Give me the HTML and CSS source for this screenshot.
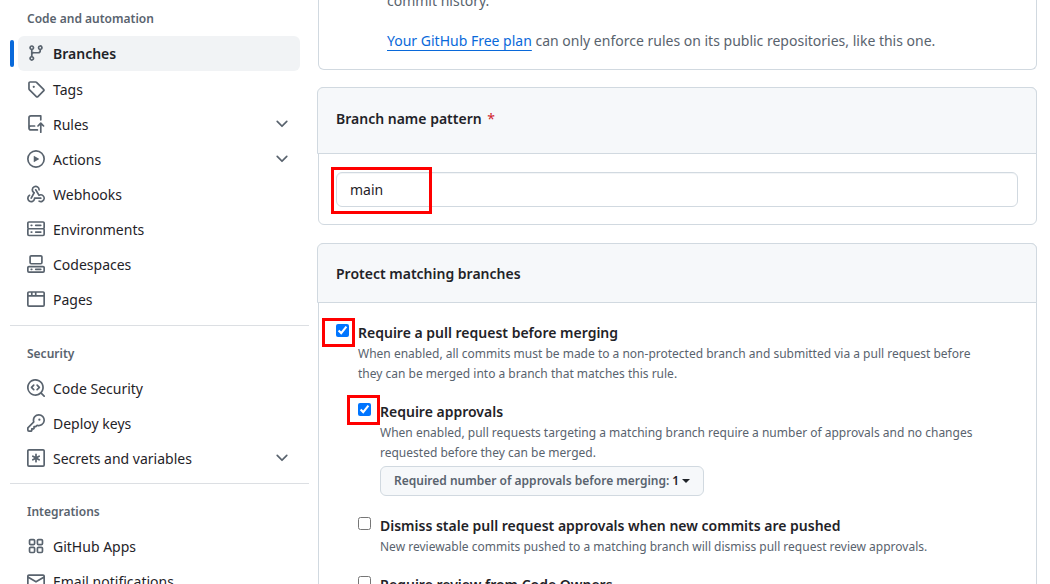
FILE: index.html
```html
<!DOCTYPE html>
<html lang="en">
<head>
<meta charset="utf-8">
<meta name="viewport" content="width=device-width, initial-scale=1">
<title>Branch protection rule</title>
<link rel="stylesheet" href="styles.css">
</head>
<body>
<div class="page">
  <nav class="sidebar" aria-label="Repository settings">
    <section class="group">
      <h2 class="group-title">Code and automation</h2>
      <ul class="nav-list">
        <li><a class="nav-item selected" href="#" aria-current="page">
          <svg class="icon" viewBox="0 0 16 16"><path d="M9.5 3.25a2.25 2.25 0 1 1 3 2.122V6A2.5 2.5 0 0 1 10 8.5H6a1 1 0 0 0-1 1v1.128a2.251 2.251 0 1 1-1.5 0V5.372a2.25 2.25 0 1 1 1.5 0v1.836A2.493 2.493 0 0 1 6 7h4a1 1 0 0 0 1-1v-.628A2.25 2.25 0 0 1 9.5 3.25Zm-6 0a.75.75 0 1 0 1.5 0 .75.75 0 0 0-1.5 0Zm8.25-.75a.75.75 0 1 0 0 1.5.75.75 0 0 0 0-1.5ZM4.25 12a.75.75 0 1 0 0 1.5.75.75 0 0 0 0-1.5Z"/></svg>
          <span class="nav-label">Branches</span></a></li>
        <li><a class="nav-item" href="#">
          <svg class="icon" viewBox="0 0 16 16"><path d="M1 7.775V2.75C1 1.784 1.784 1 2.75 1h5.025c.464 0 .91.184 1.238.513l6.25 6.25a1.75 1.75 0 0 1 0 2.474l-5.026 5.026a1.75 1.75 0 0 1-2.474 0l-6.25-6.25A1.752 1.752 0 0 1 1 7.775Zm1.5 0c0 .066.026.13.073.177l6.25 6.25a.25.25 0 0 0 .354 0l5.025-5.025a.25.25 0 0 0 0-.354l-6.25-6.25a.25.25 0 0 0-.177-.073H2.75a.25.25 0 0 0-.25.25ZM6 5a1 1 0 1 1 0 2 1 1 0 0 1 0-2Z"/></svg>
          <span class="nav-label">Tags</span></a></li>
        <li><button class="nav-item" type="button" aria-expanded="false">
          <svg class="icon" viewBox="0 0 16 16"><path d="M1 2.5A2.5 2.5 0 0 1 3.5 0h8.75a.75.75 0 0 1 .75.75v3.5a.75.75 0 0 1-1.5 0V1.5h-8a1 1 0 0 0-1 1v6.708A2.493 2.493 0 0 1 3.5 9h3.25a.75.75 0 0 1 0 1.5H3.5a1 1 0 0 0 0 2h5.75a.75.75 0 0 1 0 1.5H3.5A2.5 2.5 0 0 1 1 11.5Zm13.23 7.79-1.225-1.224v6.184a.75.75 0 0 1-1.5 0V9.066L10.28 10.29a.75.75 0 0 1-1.06-1.061l2.505-2.504a.75.75 0 0 1 1.06 0L15.29 9.23a.751.751 0 0 1-.018 1.042.751.751 0 0 1-1.042.018Z"/></svg>
          <span class="nav-label">Rules</span>
          <svg class="chevron" viewBox="0 0 16 16"><path d="M12.78 5.22a.749.749 0 0 1 0 1.06l-4.25 4.25a.749.749 0 0 1-1.06 0L3.22 6.28a.749.749 0 1 1 1.06-1.06L8 8.939l3.72-3.719a.749.749 0 0 1 1.06 0Z"/></svg></button></li>
        <li><button class="nav-item" type="button" aria-expanded="false">
          <svg class="icon" viewBox="0 0 16 16"><path d="M8 0a8 8 0 1 1 0 16A8 8 0 0 1 8 0ZM1.5 8a6.5 6.5 0 1 0 13 0 6.5 6.5 0 0 0-13 0Zm4.879-2.773 4.264 2.559a.25.25 0 0 1 0 .428l-4.264 2.559A.25.25 0 0 1 6 10.559V5.442a.25.25 0 0 1 .379-.215Z"/></svg>
          <span class="nav-label">Actions</span>
          <svg class="chevron" viewBox="0 0 16 16"><path d="M12.78 5.22a.749.749 0 0 1 0 1.06l-4.25 4.25a.749.749 0 0 1-1.06 0L3.22 6.28a.749.749 0 1 1 1.06-1.06L8 8.939l3.72-3.719a.749.749 0 0 1 1.06 0Z"/></svg></button></li>
        <li><a class="nav-item" href="#">
          <svg class="icon" viewBox="0 0 16 16"><path d="M5.5 4.25a2.25 2.25 0 0 1 4.5 0 .75.75 0 0 0 1.5 0 3.75 3.75 0 1 0-6.14 2.889l-2.272 4.258a.75.75 0 0 0 1.324.706L7 7.25a.75.75 0 0 0-.309-1.015A2.25 2.25 0 0 1 5.5 4.25Z"/><path d="M7.364 3.607a.75.75 0 0 1 1.03.257l2.608 4.349a3.75 3.75 0 1 1-.628 6.785.75.75 0 0 1 .752-1.299 2.25 2.25 0 1 0-.033-3.88.75.75 0 0 1-1.03-.256L7.107 4.636a.75.75 0 0 1 .257-1.03Z"/><path d="M2.9 8.776A.75.75 0 0 1 2.625 9.8 2.25 2.25 0 1 0 6 11.75a.75.75 0 0 1 .75-.751h5.5a.75.75 0 0 1 0 1.5H7.425a3.751 3.751 0 1 1-5.55-3.998.75.75 0 0 1 1.024.274Z"/></svg>
          <span class="nav-label">Webhooks</span></a></li>
        <li><a class="nav-item" href="#">
          <svg class="icon" viewBox="0 0 16 16"><path d="M1.75 1h12.5c.966 0 1.75.784 1.75 1.75v4c0 .372-.116.717-.314 1 .198.283.314.628.314 1v4a1.75 1.75 0 0 1-1.75 1.75H1.75A1.75 1.75 0 0 1 0 12.75v-4c0-.358.109-.707.314-1a1.739 1.739 0 0 1-.314-1v-4C0 1.784.784 1 1.75 1ZM1.5 2.75v4c0 .138.112.25.25.25h12.5a.25.25 0 0 0 .25-.25v-4a.25.25 0 0 0-.25-.25H1.75a.25.25 0 0 0-.25.25Zm.25 5.75a.25.25 0 0 0-.25.25v4c0 .138.112.25.25.25h12.5a.25.25 0 0 0 .25-.25v-4a.25.25 0 0 0-.25-.25ZM7 4.75A.75.75 0 0 1 7.75 4h4.5a.75.75 0 0 1 0 1.5h-4.5A.75.75 0 0 1 7 4.75ZM7.75 10h4.5a.75.75 0 0 1 0 1.5h-4.5a.75.75 0 0 1 0-1.5ZM3 4.75A.75.75 0 0 1 3.75 4h.5a.75.75 0 0 1 0 1.5h-.5A.75.75 0 0 1 3 4.75ZM3.75 10h.5a.75.75 0 0 1 0 1.5h-.5a.75.75 0 0 1 0-1.5Z"/></svg>
          <span class="nav-label">Environments</span></a></li>
        <li><a class="nav-item" href="#">
          <svg class="icon" viewBox="0 0 16 16"><path d="M0 11.25c0-.966.784-1.75 1.75-1.75h12.5c.966 0 1.75.784 1.75 1.75v3A1.75 1.75 0 0 1 14.25 16H1.75A1.75 1.75 0 0 1 0 14.25Zm2-9.5C2 .784 2.784 0 3.75 0h8.5C13.216 0 14 .784 14 1.75v5a1.75 1.75 0 0 1-1.75 1.75h-8.5A1.75 1.75 0 0 1 2 6.75Zm1.75-.25a.25.25 0 0 0-.25.25v5c0 .138.112.25.25.25h8.5a.25.25 0 0 0 .25-.25v-5a.25.25 0 0 0-.25-.25Zm-2 9.5a.25.25 0 0 0-.25.25v3c0 .138.112.25.25.25h12.5a.25.25 0 0 0 .25-.25v-3a.25.25 0 0 0-.25-.25Z"/><path d="M7 12.75a.75.75 0 0 1 .75-.75h4.5a.75.75 0 0 1 0 1.5h-4.5a.75.75 0 0 1-.75-.75Zm-4 0a.75.75 0 0 1 .75-.75h.5a.75.75 0 0 1 0 1.5h-.5a.75.75 0 0 1-.75-.75Z"/></svg>
          <span class="nav-label">Codespaces</span></a></li>
        <li><a class="nav-item" href="#">
          <svg class="icon" viewBox="0 0 16 16"><path d="M0 2.75C0 1.784.784 1 1.75 1h12.5c.966 0 1.75.784 1.75 1.75v10.5A1.75 1.75 0 0 1 14.25 15H1.75A1.75 1.75 0 0 1 0 13.25ZM14.5 6h-13v7.25c0 .138.112.25.25.25h12.5a.25.25 0 0 0 .25-.25Zm-6-3.5v2h6V2.75a.25.25 0 0 0-.25-.25ZM5 2.5v2h2v-2Zm-3.25 0a.25.25 0 0 0-.25.25V4.5h2v-2Z"/></svg>
          <span class="nav-label">Pages</span></a></li>
      </ul>
    </section>
    <section class="group">
      <h2 class="group-title">Security</h2>
      <ul class="nav-list">
        <li><a class="nav-item" href="#">
          <svg class="icon" viewBox="0 0 16 16"><path d="M8.47 4.97a.75.75 0 0 0 0 1.06L9.94 7.5 8.47 8.97a.75.75 0 1 0 1.06 1.06l2-2a.75.75 0 0 0 0-1.06l-2-2a.75.75 0 0 0-1.06 0ZM6.53 6.03a.75.75 0 0 0-1.06-1.06l-2 2a.75.75 0 0 0 0 1.06l2 2a.75.75 0 1 0 1.06-1.06L5.06 7.5l1.47-1.47Z"/><path d="M12.246 13.307a7.501 7.501 0 1 1 1.06-1.06l2.474 2.473a.749.749 0 0 1-1.06 1.06ZM1.5 7.5a6.002 6.002 0 0 0 3.608 5.504 6.002 6.002 0 0 0 6.486-1.117.748.748 0 0 1 .292-.293A6 6 0 1 0 1.5 7.5Z"/></svg>
          <span class="nav-label">Code Security</span></a></li>
        <li><a class="nav-item" href="#">
          <svg class="icon" viewBox="0 0 16 16"><path d="M10.5 0a5.499 5.499 0 1 1-1.288 10.848l-.932.932a.749.749 0 0 1-.53.22H7v.75a.749.749 0 0 1-.22.53l-.5.5a.749.749 0 0 1-.53.22H5v.75a.749.749 0 0 1-.22.53l-.5.5a.749.749 0 0 1-.53.22h-2A1.75 1.75 0 0 1 0 14.25v-2c0-.199.079-.389.22-.53l4.932-4.932A5.5 5.5 0 0 1 10.5 0Zm-4 5.5c-.001.431.069.86.205 1.269a.75.75 0 0 1-.181.768L1.5 12.56v1.69c0 .138.112.25.25.25h1.69l.06-.06v-1.19a.75.75 0 0 1 .75-.75h1.19l.06-.06v-1.19a.75.75 0 0 1 .75-.75h1.19l1.023-1.025a.75.75 0 0 1 .768-.18A4 4 0 1 0 6.5 5.5ZM11 6a1 1 0 1 1 0-2 1 1 0 0 1 0 2Z"/></svg>
          <span class="nav-label">Deploy keys</span></a></li>
        <li><button class="nav-item" type="button" aria-expanded="false">
          <svg class="icon" viewBox="0 0 16 16"><path d="M0 1.75C0 .784.784 0 1.75 0h12.5C15.216 0 16 .784 16 1.75v12.5A1.75 1.75 0 0 1 14.25 16H1.75A1.75 1.75 0 0 1 0 14.25Zm1.75-.25a.25.25 0 0 0-.25.25v12.5c0 .138.112.25.25.25h12.5a.25.25 0 0 0 .25-.25V1.75a.25.25 0 0 0-.25-.25ZM8 4a.75.75 0 0 1 .75.75V6.7l1.69-.975a.75.75 0 0 1 .75 1.3L9.5 8l1.69.976a.75.75 0 0 1-.75 1.298L8.75 9.3v1.951a.75.75 0 0 1-1.5 0V9.299l-1.69.976a.75.75 0 0 1-.75-1.3L6.5 8l-1.69-.975a.75.75 0 0 1 .75-1.3l1.69.976V4.75A.75.75 0 0 1 8 4Z"/></svg>
          <span class="nav-label">Secrets and variables</span>
          <svg class="chevron" viewBox="0 0 16 16"><path d="M12.78 5.22a.749.749 0 0 1 0 1.06l-4.25 4.25a.749.749 0 0 1-1.06 0L3.22 6.28a.749.749 0 1 1 1.06-1.06L8 8.939l3.72-3.719a.749.749 0 0 1 1.06 0Z"/></svg></button></li>
      </ul>
    </section>
    <section class="group">
      <h2 class="group-title">Integrations</h2>
      <ul class="nav-list">
        <li><a class="nav-item" href="#">
          <svg class="icon" viewBox="0 0 16 16"><path d="M1.5 3.25c0-.966.784-1.75 1.75-1.75h2.5c.966 0 1.75.784 1.75 1.75v2.5A1.75 1.75 0 0 1 5.75 7.5h-2.5A1.75 1.75 0 0 1 1.5 5.75Zm7 0c0-.966.784-1.75 1.75-1.75h2.5c.966 0 1.75.784 1.75 1.75v2.5a1.75 1.75 0 0 1-1.75 1.75h-2.5A1.75 1.75 0 0 1 8.5 5.75Zm-7 7c0-.966.784-1.75 1.75-1.75h2.5c.966 0 1.75.784 1.75 1.75v2.5a1.75 1.75 0 0 1-1.75 1.75h-2.5a1.75 1.75 0 0 1-1.75-1.75Zm7 0c0-.966.784-1.75 1.75-1.75h2.5c.966 0 1.75.784 1.75 1.75v2.5a1.75 1.75 0 0 1-1.75 1.75h-2.5a1.75 1.75 0 0 1-1.75-1.75ZM3.25 3a.25.25 0 0 0-.25.25v2.5c0 .138.112.25.25.25h2.5A.25.25 0 0 0 6 5.75v-2.5A.25.25 0 0 0 5.75 3Zm7 0a.25.25 0 0 0-.25.25v2.5c0 .138.112.25.25.25h2.5a.25.25 0 0 0 .25-.25v-2.5a.25.25 0 0 0-.25-.25Zm-7 7a.25.25 0 0 0-.25.25v2.5c0 .138.112.25.25.25h2.5a.25.25 0 0 0 .25-.25v-2.5a.25.25 0 0 0-.25-.25Zm7 0a.25.25 0 0 0-.25.25v2.5c0 .138.112.25.25.25h2.5a.25.25 0 0 0 .25-.25v-2.5a.25.25 0 0 0-.25-.25Z"/></svg>
          <span class="nav-label">GitHub Apps</span></a></li>
        <li><a class="nav-item" href="#">
          <svg class="icon" viewBox="0 0 16 16"><path d="M1.75 2h12.5c.966 0 1.75.784 1.75 1.75v8.5A1.75 1.75 0 0 1 14.25 14H1.75A1.75 1.75 0 0 1 0 12.25v-8.5C0 2.784.784 2 1.75 2ZM1.5 12.251c0 .138.112.25.25.25h12.5a.25.25 0 0 0 .25-.25V5.809L8.38 9.397a.75.75 0 0 1-.76 0L1.5 5.809v6.442Zm13-8.181v-.32a.25.25 0 0 0-.25-.25H1.75a.25.25 0 0 0-.25.25v.32L8 7.88Z"/></svg>
          <span class="nav-label">Email notifications</span></a></li>
      </ul>
    </section>
  </nav>

  <main class="content">
    <section class="box notice">
      <p>commit history.</p>
      <p><a class="link" href="#">Your GitHub Free plan</a> can only enforce rules on its public repositories, like this one.</p>
    </section>

    <section class="box">
      <header class="box-header tall">
        <label class="box-title" for="pattern">Branch name pattern <span class="required">*</span></label>
      </header>
      <div class="box-field">
        <div class="marked-field">
          <input class="text-input" id="pattern" type="text" value="main" required>
          <span class="mark mark-input"></span>
        </div>
      </div>
    </section>

    <section class="box">
      <header class="box-header">
        <h2 class="box-title">Protect matching branches</h2>
      </header>
      <div class="rules">
        <div class="rule">
          <span class="check"><input type="checkbox" id="require-pr" checked><span class="mark mark-pr"></span></span>
          <div class="rule-body">
            <label class="rule-title" for="require-pr">Require a pull request before merging</label>
            <p class="rule-note">When enabled, all commits must be made to a non-protected branch and submitted via a pull request before they can be merged into a branch that matches this rule.</p>
          </div>
        </div>
        <div class="subrules">
          <div class="rule">
            <span class="check"><input type="checkbox" id="approvals" checked><span class="mark mark-approvals"></span></span>
            <div class="rule-body">
              <label class="rule-title" for="approvals">Require approvals</label>
              <p class="rule-note">When enabled, pull requests targeting a matching branch require a number of approvals and no changes requested before they can be merged.</p>
              <button class="menu-button" type="button" aria-haspopup="menu"><span class="menu-label">Required number of approvals before merging:</span> 1<span class="caret"></span></button>
            </div>
          </div>
          <div class="rule">
            <span class="check"><input type="checkbox" id="dismiss"></span>
            <div class="rule-body">
              <label class="rule-title" for="dismiss">Dismiss stale pull request approvals when new commits are pushed</label>
              <p class="rule-note">New reviewable commits pushed to a matching branch will dismiss pull request review approvals.</p>
            </div>
          </div>
          <div class="rule">
            <span class="check"><input type="checkbox" id="owners"></span>
            <div class="rule-body">
              <label class="rule-title" for="owners">Require review from Code Owners</label>
            </div>
          </div>
        </div>
      </div>
    </section>
  </main>
</div>
</body>
</html>
```
FILE: styles.css
```css
* {
  box-sizing: border-box;
}

body {
  margin: 0;
  background: #fff;
  color: #1f2328;
  font: 14px/20px "Noto Sans", "Liberation Sans", sans-serif;
}

.page {
  display: flex;
  gap: 9px;
  height: 100vh;
  padding: 0 13px 0 10px;
  overflow: hidden;
}

h2,
p,
ul {
  margin: 0;
  padding: 0;
}

button,
input {
  font: inherit;
  color: inherit;
}

.sidebar {
  flex: 0 0 299px;
}

.group {
  padding: 16px 0 7px;
}

.group:first-child {
  padding: 7px 0 8px;
}

.group + .group {
  border-top: 1px solid #dcdfe3;
}

.group-title {
  padding: 0 17px;
  margin-bottom: 5px;
  color: #59636e;
  font-size: 12px;
  font-weight: 600;
  line-height: 24px;
}

.nav-list {
  list-style: none;
}

.nav-item {
  position: relative;
  display: flex;
  align-items: center;
  gap: 8px;
  width: 282px;
  height: 35px;
  margin-left: 8px;
  padding: 0 9px;
  border: 0;
  border-radius: 6px;
  background: none;
  text-align: left;
  text-decoration: none;
  color: inherit;
}

.nav-item.selected {
  margin-bottom: 1px;
  background: #f1f3f5;
  font-weight: 600;
}

.nav-item.selected::before {
  content: "";
  position: absolute;
  left: -8px;
  top: 4px;
  width: 4px;
  height: 27px;
  border-radius: 6px;
  background: #0969da;
}

.icon,
.chevron {
  flex: none;
  width: 18px;
  height: 18px;
  margin-bottom: 2px;
  fill: #59636e;
}

.nav-label {
  flex: 1;
}

.content {
  flex: 1;
  min-width: 0;
}

.box {
  margin-bottom: 18px;
  border: 1px solid #d1d9e0;
  border-radius: 6px;
}

.notice {
  display: grid;
  gap: 17px;
  margin: -11px 0 17px;
  padding: 0 68px 17px;
  border-top: 0;
  border-radius: 0 0 6px 6px;
  color: #59636e;
  line-height: 23px;
}

.link {
  color: #0969da;
  text-decoration: underline;
  text-underline-offset: 4px;
}

.box-header {
  margin: -1px -1px 0 -2px;
  padding: 20px 18px 18px;
  border: 1px solid #d1d9e0;
  border-radius: 6px 6px 0 0;
  background: #f6f8fa;
  line-height: 20px;
}

.box-header.tall {
  padding: 21px 18px 24px;
}

.box-title {
  font-size: 14px;
  font-weight: 600;
}

.required {
  margin-left: 2px;
  color: #d1242f;
  font-weight: 400;
}

.box-field {
  padding: 18px 18px 17px 17px;
}

.marked-field {
  position: relative;
}

.text-input {
  display: block;
  width: 100%;
  height: 35px;
  padding: 0 13px;
  border: 1px solid #d1d9e0;
  border-radius: 6px;
  background: #fff;
  box-shadow: inset 0 1px 0 #f3f5f7;
}

.mark {
  position: absolute;
  border: 3px solid #f00;
  pointer-events: none;
}

.mark-input {
  left: -5px;
  top: -5px;
  width: 101px;
  height: 47px;
}

.mark-pr {
  left: -14px;
  top: -6px;
  width: 33px;
  height: 29px;
}

.mark-approvals {
  left: -11px;
  top: -8px;
  width: 33px;
  height: 30px;
}

.rules {
  padding: 19px 42px 0 17px;
}

.rule {
  display: flex;
  gap: 9px;
  margin-bottom: 17px;
}

.subrules {
  padding-left: 22px;
}

.check {
  position: relative;
  flex: none;
  width: 13px;
  height: 13px;
  margin-top: 2px;
}

.check input {
  display: block;
  width: 13px;
  height: 13px;
  margin: 0;
}

.rule-title {
  display: block;
  font-weight: 600;
  line-height: 22px;
}

.rule-note {
  color: #59636e;
  font-size: 12px;
  line-height: 20px;
}

.menu-button {
  display: flex;
  align-items: center;
  gap: 3px;
  height: 30px;
  margin: 3px 0 2px;
  padding: 0 13px;
  border: 1px solid #d1d9e0;
  border-radius: 6px;
  background: #f6f8fa;
  font-size: 12px;
  font-weight: 600;
}

.menu-label {
  color: #59636e;
}

.caret {
  border: 4px solid transparent;
  border-top-color: #1f2328;
  border-bottom: 0;
}
```
